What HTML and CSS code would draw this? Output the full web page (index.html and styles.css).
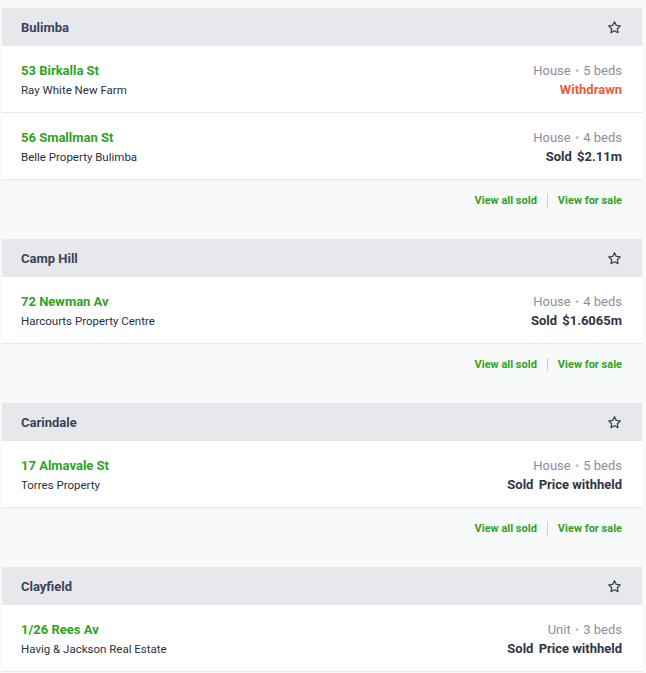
FILE: index.html
```html
<!DOCTYPE html>
<html>
<head>
<meta charset="utf-8">
<link rel="stylesheet" href="styles.css">
</head>
<body>
<div class="list">
  <section class="suburb">
    <div class="head"><span class="name">Bulimba</span>
      <svg class="star" viewBox="0 0 24 24"><path d="M12 2.8l2.8 5.8 6.3.9-4.6 4.4 1.1 6.3L12 17.2l-5.6 3 1.1-6.3-4.6-4.4 6.3-.9z"/></svg></div>
    <div class="card">
      <div class="row">
        <div class="left"><a class="addr">53 Birkalla St</a><div class="agent">Ray White New Farm</div></div>
        <div class="right"><div class="meta">House <span class="dot">•</span> 5 beds</div><div class="status withdrawn">Withdrawn</div></div>
      </div>
      <div class="row">
        <div class="left"><a class="addr">56 Smallman St</a><div class="agent">Belle Property Bulimba</div></div>
        <div class="right"><div class="meta">House <span class="dot">•</span> 4 beds</div><div class="status"><span class="sold">Sold</span> $2.11m</div></div>
      </div>
    </div>
    <div class="foot"><a>View all sold</a><span class="sep"></span><a>View for sale</a></div>
  </section>
  <section class="suburb">
    <div class="head"><span class="name">Camp Hill</span>
      <svg class="star" viewBox="0 0 24 24"><path d="M12 2.8l2.8 5.8 6.3.9-4.6 4.4 1.1 6.3L12 17.2l-5.6 3 1.1-6.3-4.6-4.4 6.3-.9z"/></svg></div>
    <div class="card">
      <div class="row">
        <div class="left"><a class="addr">72 Newman Av</a><div class="agent">Harcourts Property Centre</div></div>
        <div class="right"><div class="meta">House <span class="dot">•</span> 4 beds</div><div class="status"><span class="sold">Sold</span> $1.6065m</div></div>
      </div>
    </div>
    <div class="foot"><a>View all sold</a><span class="sep"></span><a>View for sale</a></div>
  </section>
  <section class="suburb">
    <div class="head"><span class="name">Carindale</span>
      <svg class="star" viewBox="0 0 24 24"><path d="M12 2.8l2.8 5.8 6.3.9-4.6 4.4 1.1 6.3L12 17.2l-5.6 3 1.1-6.3-4.6-4.4 6.3-.9z"/></svg></div>
    <div class="card">
      <div class="row">
        <div class="left"><a class="addr">17 Almavale St</a><div class="agent">Torres Property</div></div>
        <div class="right"><div class="meta">House <span class="dot">•</span> 5 beds</div><div class="status"><span class="sold">Sold</span> Price withheld</div></div>
      </div>
    </div>
    <div class="foot"><a>View all sold</a><span class="sep"></span><a>View for sale</a></div>
  </section>
  <section class="suburb">
    <div class="head"><span class="name">Clayfield</span>
      <svg class="star" viewBox="0 0 24 24"><path d="M12 2.8l2.8 5.8 6.3.9-4.6 4.4 1.1 6.3L12 17.2l-5.6 3 1.1-6.3-4.6-4.4 6.3-.9z"/></svg></div>
    <div class="card">
      <div class="row">
        <div class="left"><a class="addr">1/26 Rees Av</a><div class="agent">Havig &amp; Jackson Real Estate</div></div>
        <div class="right"><div class="meta">Unit <span class="dot">•</span> 3 beds</div><div class="status"><span class="sold">Sold</span> Price withheld</div></div>
      </div>
    </div>
  </section>
</div>
</body>
</html>
```
FILE: styles.css
```css
html, body {
  margin: 0;
  padding: 0;
  background: #f8f9fb;
}
body {
  font-family: Roboto, "Liberation Sans", Arial, sans-serif;
  color: #2f3545;
}
.list {
  padding: 8px 4px 0 2px;
}
.head {
  height: 38px;
  background: #e6e8ec;
  display: flex;
  align-items: center;
  justify-content: space-between;
  padding: 0 20px 0 19px;
}
.name {
  font-size: 13px;
  font-weight: 700;
  color: #3d4356;
}
.star {
  width: 15px;
  height: 15px;
  fill: none;
  stroke: #3d4356;
  stroke-width: 2;
  stroke-linejoin: round;
}
.card {
  background: #fff;
}
.row {
  display: flex;
  justify-content: space-between;
  padding: 16px 20px 13px 19px;
  border-bottom: 1px solid #e8eaee;
  height: 37px;
}
.left, .right {
  display: flex;
  flex-direction: column;
  gap: 1px;
}
.right {
  align-items: flex-end;
}
.addr {
  font-size: 13px;
  font-weight: 700;
  line-height: 18px;
  color: #2ea31f;
}
.agent {
  font-size: 11.5px;
  line-height: 18px;
  color: #2a2f3f;
}
.meta {
  font-size: 13px;
  line-height: 18px;
  color: #8a8f9e;
}
.dot {
  color: #b7bac4;
  font-size: 12px;
  margin: 0 1px;
}
.status {
  font-size: 13px;
  font-weight: 700;
  line-height: 18px;
  color: #2f3545;
}
.sold {
  margin-right: 2px;
}
.status.withdrawn {
  color: #f4583a;
}
.foot {
  height: 41px;
  margin-bottom: 18px;
  display: flex;
  align-items: center;
  justify-content: flex-end;
  padding-right: 20px;
  gap: 10px;
}
.foot a {
  font-size: 11px;
  font-weight: 700;
  color: #2ea31f;
}
.sep {
  width: 1px;
  height: 13px;
  background: #c9ccd4;
}
```
